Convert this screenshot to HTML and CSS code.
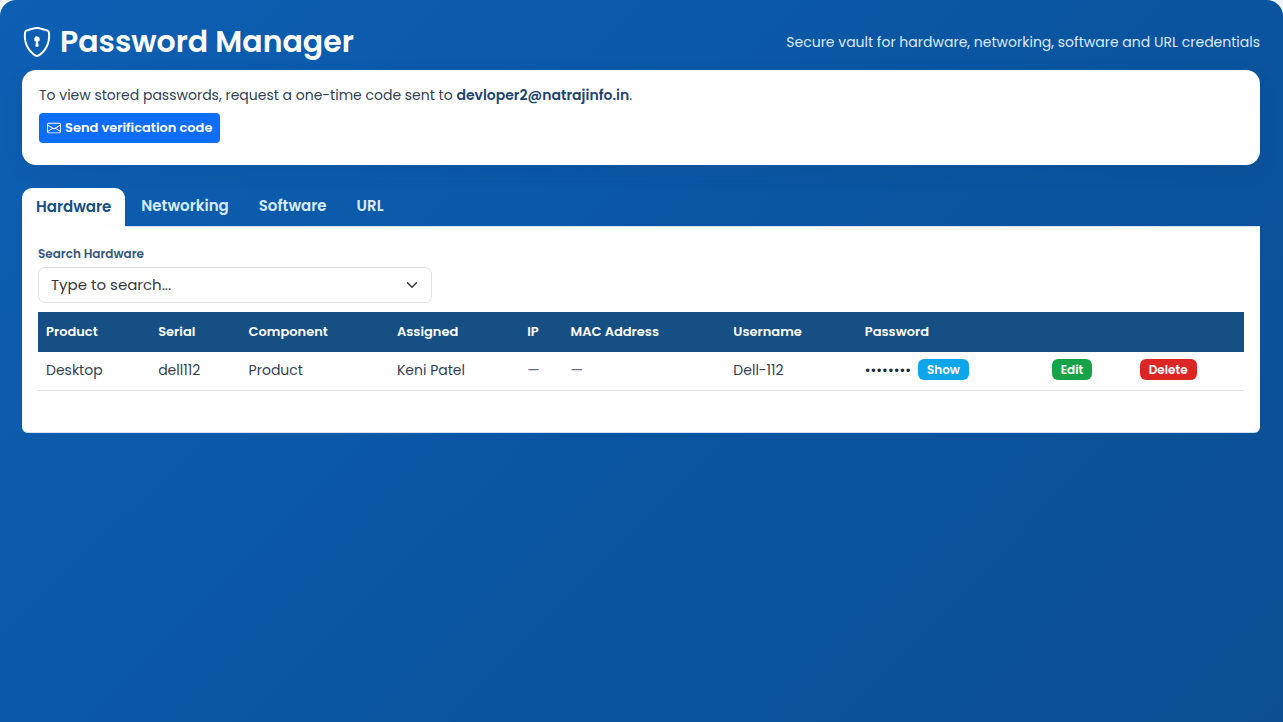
FILE: index.html
```html
<!DOCTYPE html>
<html lang="en">
<head>
<meta charset="utf-8">
<meta name="viewport" content="width=device-width, initial-scale=1">
<title>Password Manager</title>
<link rel="stylesheet" href="styles.css">
</head>
<body>
<main class="vault">
  <header class="vault-header">
    <h1 class="vault-title">
      <svg class="shield" viewBox="0 0 16 16" fill="currentColor" aria-hidden="true">
        <path d="M5.338 1.59a61 61 0 0 0-2.837.856.48.48 0 0 0-.328.39c-.554 4.157.726 7.19 2.253 9.188a10.7 10.7 0 0 0 2.287 2.233c.346.244.652.42.893.533q.18.085.293.118a1 1 0 0 0 .101.025 1 1 0 0 0 .1-.025q.114-.034.294-.118c.24-.113.547-.29.893-.533a10.7 10.7 0 0 0 2.287-2.233c1.527-1.997 2.807-5.031 2.253-9.188a.48.48 0 0 0-.328-.39c-.651-.213-1.75-.56-2.837-.855C9.552 1.29 8.531 1.067 8 1.067c-.53 0-1.552.223-2.662.524zM5.072.56C6.157.265 7.31 0 8 0s1.843.265 2.928.56c1.11.3 2.229.655 2.887.87a1.54 1.54 0 0 1 1.044 1.262c.596 4.477-.787 7.795-2.465 9.99a11.8 11.8 0 0 1-2.517 2.453 7 7 0 0 1-1.048.625c-.28.132-.581.24-.829.24s-.548-.108-.829-.24a7 7 0 0 1-1.048-.625 11.8 11.8 0 0 1-2.517-2.453C1.928 10.487.545 7.169 1.141 2.692A1.54 1.54 0 0 1 2.185 1.43 63 63 0 0 1 5.072.56"/>
        <path d="M9.5 6.5a1.5 1.5 0 0 1-1 1.415l.385 1.99a.5.5 0 0 1-.491.595h-.788a.5.5 0 0 1-.49-.595l.384-1.99a1.5 1.5 0 1 1 2-1.415"/>
      </svg>
      Password Manager
    </h1>
    <p class="vault-tagline">Secure vault for hardware, networking, software and URL credentials</p>
  </header>

  <section class="verify-card">
    <p class="verify-text">To view stored passwords, request a one-time code sent to <strong>devloper2@natrajinfo.in</strong>.</p>
    <button class="verify-button" type="button">
      <svg class="envelope" viewBox="0 0 16 16" fill="currentColor" aria-hidden="true">
        <path d="M0 4a2 2 0 0 1 2-2h12a2 2 0 0 1 2 2v8a2 2 0 0 1-2 2H2a2 2 0 0 1-2-2zm2-1a1 1 0 0 0-1 1v.217l7 4.2 7-4.2V4a1 1 0 0 0-1-1zm13 2.383-4.708 2.825L15 11.105zm-.034 6.876-5.64-3.471L8 9.583l-1.326-.795-5.64 3.47A1 1 0 0 0 2 13h12a1 1 0 0 0 .966-.741M1 11.105l4.708-2.897L1 5.383z"/>
      </svg>
      Send verification code
    </button>
  </section>

  <nav class="tabs" role="tablist" aria-label="Credential types">
    <button class="tab tab-active" type="button" role="tab" aria-selected="true">Hardware</button>
    <button class="tab" type="button" role="tab" aria-selected="false">Networking</button>
    <button class="tab" type="button" role="tab" aria-selected="false">Software</button>
    <button class="tab" type="button" role="tab" aria-selected="false">URL</button>
  </nav>

  <section class="panel">
    <label class="search-label" for="hardware-search">Search Hardware</label>
    <select class="search-select" id="hardware-search">
      <option>Type to search...</option>
    </select>
    <table class="credentials">
      <colgroup>
        <col class="col-product"><col class="col-serial"><col class="col-component"><col class="col-assigned"><col class="col-ip"><col class="col-mac"><col class="col-username"><col class="col-password"><col class="col-edit"><col class="col-delete">
      </colgroup>
      <thead>
        <tr>
          <th scope="col">Product</th>
          <th scope="col">Serial</th>
          <th scope="col">Component</th>
          <th scope="col">Assigned</th>
          <th scope="col">IP</th>
          <th scope="col">MAC Address</th>
          <th scope="col">Username</th>
          <th scope="col">Password</th>
          <th></th>
          <th></th>
        </tr>
      </thead>
      <tbody>
        <tr>
          <td>Desktop</td>
          <td>dell112</td>
          <td>Product</td>
          <td>Keni Patel</td>
          <td class="empty">—</td>
          <td class="empty">—</td>
          <td>Dell-112</td>
          <td>
            <div class="secret">
              <span class="secret-dots">••••••••</span>
              <button class="action action-show" type="button">Show</button>
            </div>
          </td>
          <td><button class="action action-edit" type="button">Edit</button></td>
          <td><button class="action action-delete" type="button">Delete</button></td>
        </tr>
      </tbody>
    </table>
  </section>
</main>
</body>
</html>
```

FILE: styles.css
```css
* {
  box-sizing: border-box;
}

body {
  margin: 0;
  background: #f1f5fb;
  color: #334155;
  font-family: Poppins, Inter, "Open Sans", sans-serif;
  font-size: 14px;
  line-height: 24px;
}

button,
select {
  font-family: inherit;
}

.vault {
  min-height: 100vh;
  padding: 18px 23px 24px 22px;
  border-radius: 16px 16px 0 0;
  background: linear-gradient(135deg, #0d5fb3 0%, #0a549f 60%, #0b4e93 100%);
}

.vault-header {
  display: flex;
  flex-wrap: wrap;
  align-items: center;
  justify-content: space-between;
  gap: 4px 16px;
  margin-bottom: 4px;
}

.vault-title {
  display: flex;
  align-items: center;
  gap: 8px;
  margin: 0;
  color: #fff;
  font-size: 30px;
  font-weight: 600;
  line-height: 48px;
}

.shield {
  width: 30px;
  height: 30px;
}

.vault-tagline {
  margin: 0;
  color: #dbeafe;
}

.verify-card {
  padding: 13px 17px 22px;
  border-radius: 14px;
  background: #fff;
  box-shadow: 0 8px 20px rgba(8, 50, 100, 0.08);
}

.verify-text {
  margin: 0 0 6px;
}

.verify-text strong {
  color: #1e4470;
  font-weight: 600;
}

.verify-button {
  display: inline-flex;
  align-items: center;
  gap: 4px;
  height: 30px;
  padding: 0 8px;
  border: 0;
  border-radius: 4px;
  background: #0d6efd;
  color: #fff;
  font-size: 13px;
  font-weight: 600;
}

.envelope {
  width: 14px;
  height: 14px;
}

.tabs {
  display: flex;
  gap: 2px;
  margin-top: 23px;
}

.tab {
  height: 38px;
  padding: 0 14px 4px;
  border: 0;
  border-radius: 10px 10px 0 0;
  background: transparent;
  color: #d6ebff;
  font-size: 15px;
  font-weight: 600;
}

.tab-active {
  position: relative;
  padding-bottom: 2px;
  background: #fff;
  box-shadow: 0 1px 0 #fafcfe;
  color: #154f83;
}

.panel {
  padding: 16px 16px 41px;
  border: 1px solid #cfe2f7;
  border-width: 1px 0;
  border-radius: 0 0 6px 6px;
  background: #fff;
}

.search-label {
  display: block;
  margin-bottom: 2px;
  color: #36597e;
  font-size: 12px;
  font-weight: 600;
  line-height: 22px;
}

.search-select {
  display: block;
  width: calc(33.333% - 8px);
  height: 36px;
  margin-bottom: 9px;
  padding: 0 36px 2px 12px;
  border: 1px solid #dee2e6;
  border-radius: 7px;
  appearance: none;
  background: #fff url("data:image/svg+xml,%3Csvg xmlns='http://www.w3.org/2000/svg' viewBox='0 0 16 16'%3E%3Cpath fill='none' stroke='%23343a40' stroke-linecap='round' stroke-linejoin='round' stroke-width='2' d='m2 5 6 6 6-6'/%3E%3C/svg%3E") no-repeat right 13px center / 12px 12px;
  color: #343a40;
  font-size: 15px;
}

.credentials {
  width: 100%;
  border-collapse: collapse;
  table-layout: fixed;
  font-size: 14px;
  text-align: left;
}

.col-product { width: 9.3%; }
.col-serial { width: 7.5%; }
.col-component { width: 12.3%; }
.col-assigned { width: 10.8%; }
.col-ip { width: 3.6%; }
.col-mac { width: 13.5%; }
.col-username { width: 10.9%; }
.col-password { width: 15.5%; }
.col-edit { width: 7.3%; }
.col-delete { width: 9.3%; }

.credentials th {
  padding: 8px;
  background: #154f83;
  color: #fff;
  font-size: 13px;
  font-weight: 600;
  white-space: nowrap;
}

.credentials td {
  height: 38px;
  padding: 0 8px 2px;
  border-bottom: 1px solid #dee2e6;
  white-space: nowrap;
}

.credentials .empty {
  color: #64708a;
}

.secret {
  display: flex;
  align-items: center;
  gap: 7px;
}

.secret-dots {
  color: #1e293b;
}

.action {
  display: block;
  height: 21px;
  padding: 0 9px;
  border: 0;
  border-radius: 6px;
  color: #fff;
  font-size: 12px;
  font-weight: 600;
}

.action-show { background: #0ea5e9; }
.action-edit { background: #16a34a; }
.action-delete { background: #dc2626; }
```
